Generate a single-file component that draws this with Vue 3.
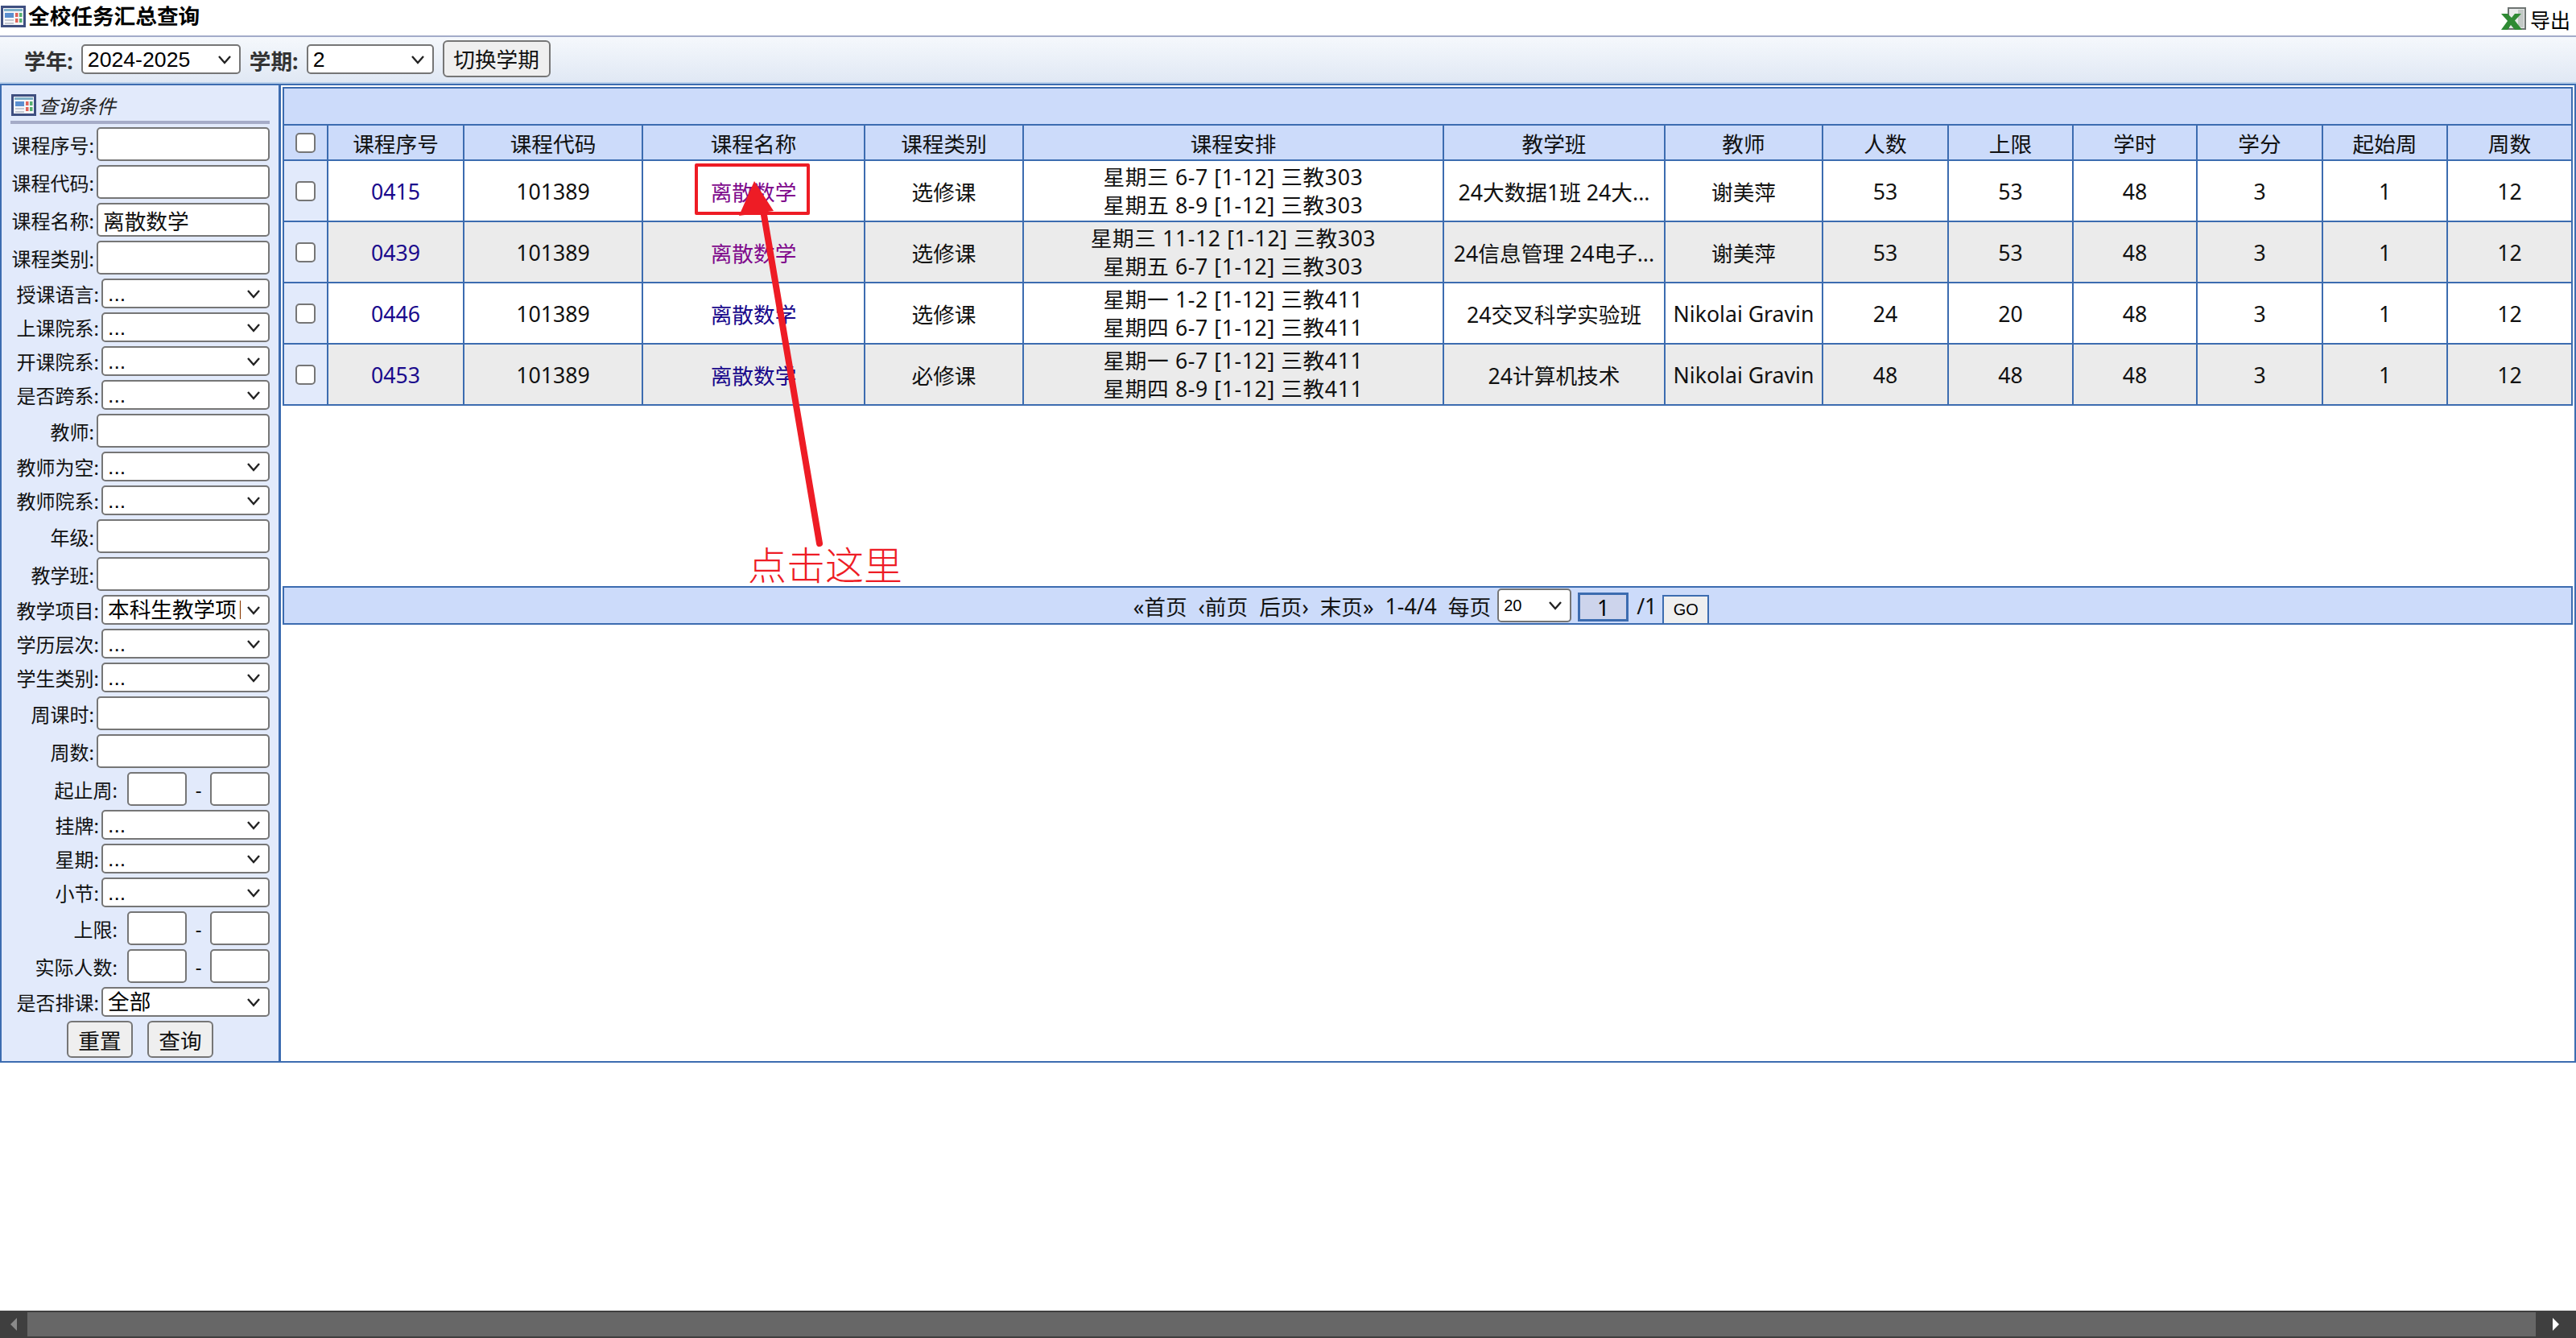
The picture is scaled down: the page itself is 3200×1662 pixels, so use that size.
<template>
  <div class="page">
    <div class="title-bar">
      <div class="title">
        <svg class="win-icon" viewBox="0 0 31 27"><rect x="1.500" y="1.500" width="28" height="24" fill="#f6f7fa" stroke="#3f4f80" stroke-width="3"/><rect x="4" y="4" width="23" height="3" fill="#7fb0c8"/><rect x="5" y="9" width="11" height="6" fill="#5b8fd0"/><rect x="5" y="17" width="11" height="2" fill="#c5c9d2"/><rect x="5" y="21" width="11" height="2" fill="#c5c9d2"/><rect x="18" y="9" width="3.500" height="5" fill="#e0645a"/><rect x="23" y="9" width="3.500" height="5" fill="#55b070"/><rect x="18" y="16" width="3.500" height="5" fill="#e0645a"/><rect x="23" y="16" width="3.500" height="5" fill="#55b070"/></svg>
        <span class="title-text">全校任务汇总查询</span>
      </div>
      <div class="export">
        <svg class="xls-icon" viewBox="0 0 31 29"><path d="M9 1h21v26H9z" fill="#e8eaea" stroke="#6d7471" stroke-width="2"/><path d="M21 3h7v22h-7z" fill="#c3c9c6"/><path d="M0 8h8l5 5 4-5h8l-8 8.500L26 28h-9l-5-6-4 6H0l8-11z" fill="#2f8a34"/></svg>
        <span>导出</span>
      </div>
    </div>

    <div class="toolbar">
      <label class="tb-label">学年:</label>
      <select class="tb-select year"><option>2024-2025</option></select>
      <label class="tb-label">学期:</label>
      <select class="tb-select term"><option>2</option></select>
      <button class="btn switch">切换学期</button>
    </div>

    <div class="main">
      <aside class="side">
        <div class="side-head">
          <svg class="win-icon" viewBox="0 0 31 27"><rect x="1.500" y="1.500" width="28" height="24" fill="#f6f7fa" stroke="#3f4f80" stroke-width="3"/><rect x="4" y="4" width="23" height="3" fill="#7fb0c8"/><rect x="5" y="9" width="11" height="6" fill="#5b8fd0"/><rect x="5" y="17" width="11" height="2" fill="#c5c9d2"/><rect x="5" y="21" width="11" height="2" fill="#c5c9d2"/><rect x="18" y="9" width="3.500" height="5" fill="#e0645a"/><rect x="23" y="9" width="3.500" height="5" fill="#55b070"/><rect x="18" y="16" width="3.500" height="5" fill="#e0645a"/><rect x="23" y="16" width="3.500" height="5" fill="#55b070"/></svg>
          <em>查询条件</em>
        </div>
        <div v-for="f in fields" :key="f.label" class="field" :class="f.type">
          <span class="f-label">{{ f.label }}:</span>
          <input v-if="f.type === 'text'" class="f-input" :value="f.value || ''" />
          <select v-else-if="f.type === 'select'" class="f-select"><option>{{ f.value || '...' }}</option></select>
          <template v-else>
            <input class="f-input small" />
            <span class="dash">-</span>
            <input class="f-input small" />
          </template>
        </div>
        <div class="side-btns">
          <button class="btn">重置</button>
          <button class="btn">查询</button>
        </div>
      </aside>

      <section class="content">
        <table class="grid">
          <colgroup>
            <col v-for="(w, i) in colWidths" :key="i" :style="{ width: w + 'px' }" />
          </colgroup>
          <thead>
            <tr class="band"><th :colspan="colWidths.length"></th></tr>
            <tr class="head">
              <th class="chk"><input type="checkbox" class="check" /></th>
              <th v-for="h in headers" :key="h">{{ h }}</th>
            </tr>
          </thead>
          <tbody>
            <tr v-for="(r, i) in rows" :key="r.no" :class="{ alt: i % 2 }">
              <td class="chk"><input type="checkbox" class="check" /></td>
              <td><a class="link">{{ r.no }}</a></td>
              <td>101389</td>
              <td><a class="link" :class="{ visited: i < 2 }">离散数学</a></td>
              <td>{{ r.kind }}</td>
              <td class="sched"><div v-for="s in r.sched" :key="s">{{ s }}</div></td>
              <td>{{ r.cls }}</td>
              <td>{{ r.teacher }}</td>
              <td>{{ r.num }}</td>
              <td>{{ r.limit }}</td>
              <td>48</td>
              <td>3</td>
              <td>1</td>
              <td>12</td>
            </tr>
          </tbody>
        </table>
        <div class="blank"></div>
        <div class="pager">
          <span>«首页</span><span>‹前页</span><span>后页›</span><span>末页»</span><span>1-4/4</span><span>每页</span>
          <select class="pg-select"><option>20</option></select>
          <input class="pg-input" value="1" />
          <span class="pg-total">/1</span>
          <button class="pg-go">GO</button>
        </div>
      </section>
    </div>

    <div class="spacer"></div>
    <div class="hscroll">
      <span class="arrow left"></span>
      <div class="thumb"></div>
      <span class="arrow right"></span>
    </div>

    <!-- annotation drawn over the screenshot -->
    <div class="mark-box"></div>
    <svg class="mark-arrow" width="140" height="470" viewBox="900 215 140 470">
      <line x1="1018" y1="675" x2="947" y2="255" stroke="#ee1c25" stroke-width="8" stroke-linecap="round" />
      <polygon points="937,225 961,262 918,268" fill="#ee1c25" />
    </svg>
    <div class="mark-text">点击这里</div>
  </div>
</template>

<script setup>
const colWidths = [55, 169, 222, 276, 197, 522, 275, 196, 156, 155, 154, 156, 155, 155]
const headers = ['课程序号', '课程代码', '课程名称', '课程类别', '课程安排', '教学班', '教师', '人数', '上限', '学时', '学分', '起始周', '周数']

const fields = [
  { label: '课程序号', type: 'text' },
  { label: '课程代码', type: 'text' },
  { label: '课程名称', type: 'text', value: '离散数学' },
  { label: '课程类别', type: 'text' },
  { label: '授课语言', type: 'select' },
  { label: '上课院系', type: 'select' },
  { label: '开课院系', type: 'select' },
  { label: '是否跨系', type: 'select' },
  { label: '教师', type: 'text' },
  { label: '教师为空', type: 'select' },
  { label: '教师院系', type: 'select' },
  { label: '年级', type: 'text' },
  { label: '教学班', type: 'text' },
  { label: '教学项目', type: 'select', value: '本科生教学项目' },
  { label: '学历层次', type: 'select' },
  { label: '学生类别', type: 'select' },
  { label: '周课时', type: 'text' },
  { label: '周数', type: 'text' },
  { label: '起止周', type: 'range' },
  { label: '挂牌', type: 'select' },
  { label: '星期', type: 'select' },
  { label: '小节', type: 'select' },
  { label: '上限', type: 'range' },
  { label: '实际人数', type: 'range' },
  { label: '是否排课', type: 'select', value: '全部' }
]

const rows = [
  { no: '0415', kind: '选修课', sched: ['星期三 6-7 [1-12] 三教303', '星期五 8-9 [1-12] 三教303'], cls: '24大数据1班 24大...', teacher: '谢美萍', num: 53, limit: 53 },
  { no: '0439', kind: '选修课', sched: ['星期三 11-12 [1-12] 三教303', '星期五 6-7 [1-12] 三教303'], cls: '24信息管理 24电子...', teacher: '谢美萍', num: 53, limit: 53 },
  { no: '0446', kind: '选修课', sched: ['星期一 1-2 [1-12] 三教411', '星期四 6-7 [1-12] 三教411'], cls: '24交叉科学实验班', teacher: 'Nikolai Gravin', num: 24, limit: 20 },
  { no: '0453', kind: '必修课', sched: ['星期一 6-7 [1-12] 三教411', '星期四 8-9 [1-12] 三教411'], cls: '24计算机技术', teacher: 'Nikolai Gravin', num: 48, limit: 48 }
]
</script>

<style>
html, body { margin: 0; background: #fff; }
</style>

<style scoped>
.page {
  position: relative;
  width: 3200px;
  height: 1662px;
  display: flex;
  flex-direction: column;
  overflow: hidden;
  font-family: "Noto Sans", "Noto Sans CJK SC", sans-serif;
  font-size: 26.67px;
  color: #111;
}
.title-bar {
  height: 44px;
  display: flex;
  justify-content: space-between;
  align-items: center;
  padding: 0 7px 0 1px;
}
.title {
  display: flex;
  align-items: center;
  gap: 3px;
  font-size: 26.67px;
  font-weight: 700;
  color: #000;
  margin-top: -4px;
}
.title-text { margin-top: -4px; }
.win-icon { width: 31px; height: 27px; flex: none; }
.export {
  display: flex;
  align-items: center;
  gap: 5px;
  font-size: 25px;
  color: #000;
  margin-top: 3px;
}
.xls-icon { width: 31px; height: 29px; }

.toolbar {
  height: 60px;
  box-sizing: border-box;
  display: flex;
  align-items: center;
  padding-left: 30px;
  background: linear-gradient(#f5f8fc, #e0e8f4);
  border-top: 2px solid #a3abc9;
  border-bottom: 2px solid #b9d0ea;
}
.tb-label { font-size: 26.67px; font-weight: 700; color: #333; margin-right: 10px; }
.tb-select, .f-select, .pg-select {
  appearance: none;
  box-sizing: border-box;
  font-family: "Liberation Sans", "Noto Sans CJK SC", sans-serif;
  font-size: 26.67px;
  color: #000;
  background: #fff url("data:image/svg+xml,%3Csvg xmlns='http://www.w3.org/2000/svg' width='18' height='12'%3E%3Cpath d='M2 2l7 8 7-8' fill='none' stroke='%23222' stroke-width='2.400'/%3E%3C/svg%3E") no-repeat right 9px center;
  border: 2px solid #767676;
  border-radius: 5px;
  height: 37px;
  padding: 0 34px 0 6px;
}
.tb-select { margin-right: 11px; margin-top: -1px; }
.tb-select.year { width: 198px; }
.tb-select.term { width: 158px; }
.btn {
  box-sizing: border-box;
  width: 82px;
  height: 46px;
  padding: 0;
  font-family: inherit;
  font-size: 26.67px;
  color: #111;
  background: #efefef;
  border: 2px solid #767676;
  border-radius: 6px;
}
.btn.switch { width: 134px; margin-top: -3px; }

.main {
  height: 1216px;
  box-sizing: border-box;
  display: flex;
  border: 2px solid #3c6cb0;
}
.side {
  width: 347px;
  flex: none;
  box-sizing: border-box;
  background: #e2eafb;
  border-right: 3px solid #3c6cb0;
}
.side-head {
  height: 48px;
  box-sizing: border-box;
  margin: 0 11px 4px;
  padding: 4px 0 0 1px;
  border-bottom: 4px solid #a5abc7;
  display: flex;
  align-items: center;
  gap: 3px;
  font-size: 24px;
  color: #222;
}
.field {
  display: flex;
  justify-content: flex-end;
  align-items: center;
  padding-right: 11px;
  margin-bottom: 5px;
}
.f-label { font-size: 24px; white-space: nowrap; color: #111; }
.f-input {
  box-sizing: border-box;
  width: 215px;
  height: 42px;
  margin-left: 3px;
  padding: 0 6px;
  font-family: inherit;
  font-size: 26.67px;
  color: #111;
  background: #fff;
  border: 2px solid #767676;
  border-radius: 5px;
  outline: none;
}
.f-input.small { width: 74px; margin-left: 0; }
.range .f-label { margin-right: 12px; }
.dash { width: 29px; text-align: center; font-size: 24px; }
.f-select { width: 209px; margin-left: 3px; }
.side-btns {
  display: flex;
  justify-content: center;
  gap: 18px;
}

.content {
  flex: 1;
  min-width: 0;
  padding: 2px 2px 0;
}
.grid {
  table-layout: fixed;
  width: 2845px;
  border-collapse: separate;
  border-spacing: 0;
  border-left: 2px solid #3c6cb0;
  border-top: 2px solid #3c6cb0;
}
.grid th, .grid td {
  box-sizing: border-box;
  padding: 0;
  text-align: center;
  white-space: nowrap;
  font-weight: 400;
  border-right: 2px solid #3c6cb0;
  border-bottom: 2px solid #3c6cb0;
}
.band th { height: 46px; background: #ccdbfa; }
.head th { height: 44px; background: #ccdbfa; }
.grid td { height: 76px; background: #fff; }
.grid tr.alt td { background: #ebebeb; }
.grid .chk, .grid tr.alt td.chk { background: #e2eafb; }
.grid .head th.chk { background: #ccdbfa; }
.sched { line-height: 35px; letter-spacing: 0.6px; }
.link { color: #1a0a8c; }
.link.visited { color: #800a8c; }
.check {
  appearance: none;
  display: block;
  width: 25px;
  height: 25px;
  margin: 0 auto;
  background: #fff;
  border: 2px solid #767676;
  border-radius: 5px;
}
.blank { height: 224px; }
.pager {
  width: 2845px;
  height: 48px;
  box-sizing: border-box;
  display: flex;
  justify-content: center;
  align-items: center;
  gap: 14px;
  background: #ccdbfa;
  border: 2px solid #3c6cb0;
  padding-right: 16px;
}
.pg-select {
  width: 92px;
  height: 42px;
  font-size: 20px;
  padding-left: 6px;
  margin-left: -6px;
}
.pg-input {
  box-sizing: border-box;
  width: 63px;
  height: 36px;
  margin: 4px 0 0 -6px;
  text-align: center;
  font-family: inherit;
  font-size: 26.67px;
  background: #cdd4ec;
  border: 3px solid #3c6cb0;
  outline: none;
}
.pg-total { margin-left: -4px; }
.pg-go {
  box-sizing: border-box;
  width: 58px;
  height: 35px;
  margin: 9px 0 0 -7px;
  padding: 0;
  font-family: "Liberation Sans", sans-serif;
  font-size: 20px;
  background: #efefef;
  border: 2px solid #3c6cb0;
  border-bottom: none;
}

.spacer { flex: 1; }
.hscroll {
  height: 34px;
  display: flex;
  align-items: center;
  background: #3f3f3f;
}
.thumb { flex: 1; height: 30px; background: #676767; }
.arrow { width: 34px; flex: none; display: flex; justify-content: center; }
.arrow::before {
  content: "";
  border-top: 8px solid transparent;
  border-bottom: 8px solid transparent;
}
.arrow.left::before { border-right: 8px solid #8a8a8a; }
.arrow.right { width: 50px; }
.arrow.right::before { border-left: 8px solid #fff; }

.mark-box {
  position: absolute;
  left: 863px;
  top: 203px;
  width: 143px;
  height: 64px;
  box-sizing: border-box;
  border: 4px solid #ee1c25;
  border-radius: 2px;
}
.mark-arrow {
  position: absolute;
  left: 900px;
  top: 215px;
}
.mark-text {
  position: absolute;
  left: 929px;
  top: 664px;
  font-size: 48px;
  font-weight: 300;
  color: #ee1c25;
}
</style>
